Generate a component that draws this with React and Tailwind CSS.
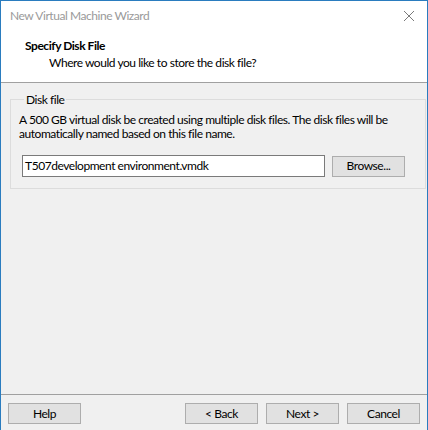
import React from "react";

const font = { fontFamily: 'Lato, "Liberation Sans", sans-serif', letterSpacing: "-0.45px" };

function WinButton({ children, className = "" }) {
  return (
    <button
      type="button"
      className={`w-[73px] h-[21px] bg-[#e1e1e1] border border-[#adadad] text-[12px] text-black leading-none flex items-center justify-center ${className}`}
    >
      {children}
    </button>
  );
}

export default function App() {
  return (
    <div
      className="w-[428px] h-[430px] flex flex-col bg-[#f0f0f0] border-l border-t border-r border-[#2a7cbf] overflow-hidden"
      style={font}
    >
      {/* title bar */}
      <div className="h-[30px] bg-white flex items-center justify-between pl-[9px] pr-[9px] shrink-0">
        <span className="text-[12px] text-[#9a9a9a]">New Virtual Machine Wizard</span>
        <svg width="12" height="12" viewBox="0 0 12 12" className="mr-[3px]">
          <path d="M1 1 L11 11 M11 1 L1 11" stroke="#7a7a7a" strokeWidth="1" fill="none" />
        </svg>
      </div>

      {/* header */}
      <div className="h-[52px] bg-white border-b border-[#a0a0a0] shrink-0 pl-[24px] pt-[6px]">
        <div className="text-[12px] font-bold text-black leading-[17px]">Specify Disk File</div>
        <div className="text-[12px] text-black leading-[17px] pl-[24px]">
          Where would you like to store the disk file?
        </div>
      </div>

      {/* body */}
      <div className="flex-1 px-[9px] pt-[9px]">
        <fieldset className="border border-[#dcdcdc] h-[97px] pl-[8px] pr-[20px]">
          <legend className="text-[12px] text-black px-[2px] ml-[5px] leading-[15px]">Disk file</legend>
          <p className="text-[12px] text-black leading-[14px] mt-[6px]">
            A 500 GB virtual disk be created using multiple disk files. The disk files will be automatically named based on this file name.
          </p>
          <div className="flex items-center mt-[14px] pl-[3px]">
            <div className="w-[303px] h-[22px] bg-white border border-[#7a7a7a] text-[12px] text-black flex items-center pl-[2px]">
              T507development environment.vmdk
            </div>
            <WinButton className="ml-[7px]">Browse...</WinButton>
          </div>
        </fieldset>
      </div>

      {/* footer */}
      <div className="h-[36px] border-t border-[#a0a0a0] shrink-0 flex items-start pt-[8px] pl-[7px] pr-[7px]">
        <WinButton>Help</WinButton>
        <div className="flex-1" />
        <div className="flex gap-[8px]">
          <WinButton>&lt; Back</WinButton>
          <WinButton>Next &gt;</WinButton>
          <WinButton>Cancel</WinButton>
        </div>
      </div>
    </div>
  );
}
